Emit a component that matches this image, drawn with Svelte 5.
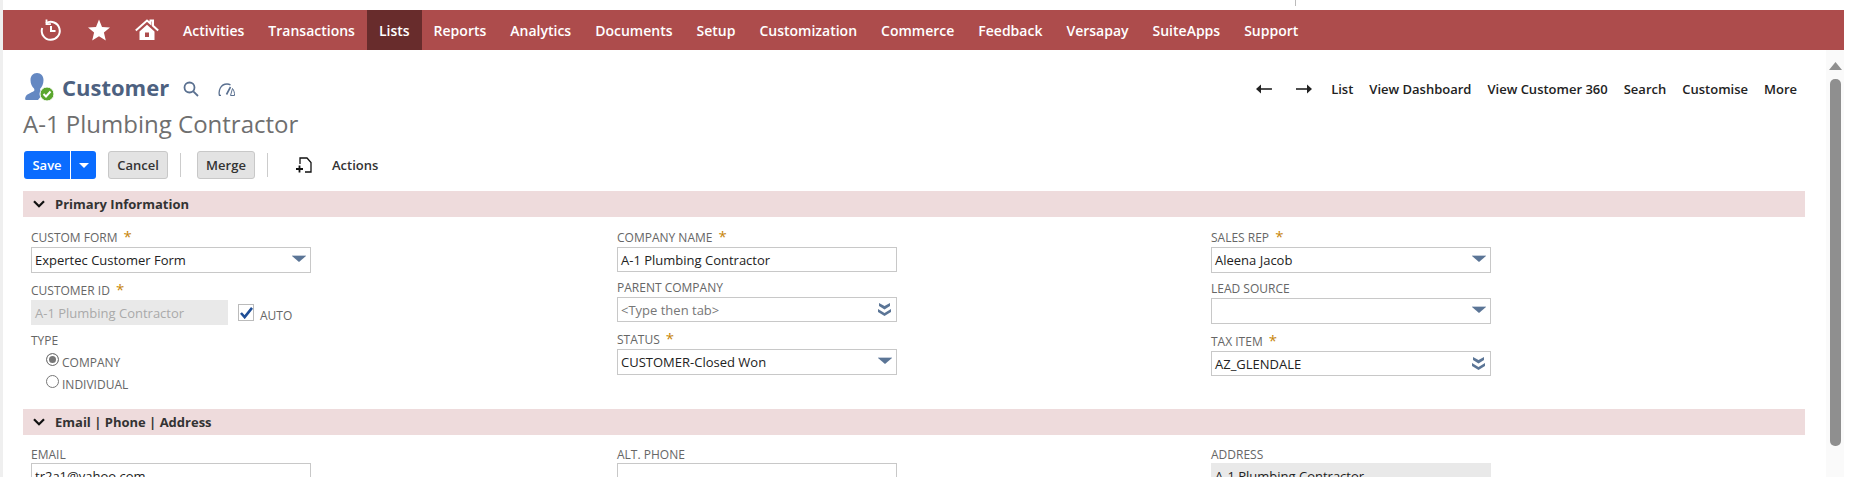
<script>
  const menu = ["Activities", "Transactions", "Lists", "Reports", "Analytics", "Documents", "Setup", "Customization", "Commerce", "Feedback", "Versapay", "SuiteApps", "Support"];
  const links = ["List", "View Dashboard", "View Customer 360", "Search", "Customise", "More"];
</script>

{#snippet arrow()}
  <svg class="arrow" width="14" height="7" viewBox="0 0 14 7"><path d="M0 1h14L7 7z" fill="#5b7596"/><path d="M0 .5h14" stroke="#c5cedb"/></svg>
{/snippet}

{#snippet dbl()}
  <svg class="arrow double" width="13" height="13" viewBox="0 0 13 13"><path d="M1 0l5.500 3L12 0v3L6.500 6.500 1 3zM0 6l6.500 4L13 6v3l-6.500 4L0 9z" fill="#5b7596"/></svg>
{/snippet}

<div class="page">
  <div class="topline"><span class="tick"></span></div>
  <nav>
    <div class="nav-icons">
      <svg width="24" height="24" viewBox="0 0 24 24" fill="none" stroke="#fff" stroke-width="2">
        <path d="M7 5.200A9 9 0 1 1 3.200 10"/><path d="M7.500 1.500v4.600h4.400" stroke-width="1.800"/><path d="M12 8v5h4.500"/>
      </svg>
      <svg width="24" height="24" viewBox="0 0 24 24"><path d="M12 1.500l3 7.400 8 .6-6.100 5.100 1.900 7.800L12 18.200 5.200 22.400l1.900-7.800L1 9.500l8-.6z" fill="#fff"/></svg>
      <svg width="24" height="24" viewBox="0 0 24 24">
        <path d="M.800 12.500L12 2.500l3.500 3V2.500h2.500v5.200l5.200 4.800" fill="none" stroke="#fff" stroke-width="2"/>
        <path d="M4.500 13.500L12 6.800l7.500 6.700V22H4.500zM10 14.500V19h4v-4.500z" fill="#fff" fill-rule="evenodd"/>
      </svg>
    </div>
    {#each menu as item}
      <a class:active={item === "Lists"} href="#top">{item}</a>
    {/each}
  </nav>

  <div class="body">
    <main>
      <header>
        <div class="title-row">
          <svg class="cust-icon" width="30" height="29" viewBox="0 0 30 29">
            <path d="M12 0c4 0 6.500 3 6.500 7s-1.500 7-3.500 9c0 2 2 2.500 4 3.500L13 27H1c-1 0-1-1.500-.5-3C1.500 21 6 20 9 18c.5-.5.5-1.500 0-2.500C7 13.500 5.500 11 5.500 7S8 0 12 0z" fill="#6488c2"/>
            <circle cx="22" cy="21" r="7" fill="#5aa62d" stroke="#fff" stroke-width="1"/>
            <path d="M18.500 21l2.500 2.500 4.500-5" fill="none" stroke="#fff" stroke-width="2"/>
          </svg>
          <h1>Customer</h1>
          <svg class="search" width="16" height="16" viewBox="0 0 16 16" fill="none" stroke="#5a7090" stroke-width="1.800"><circle cx="6.500" cy="6.500" r="5"/><path d="M10.300 10.300L15 15"/></svg>
          <svg class="gauge" width="18" height="13" viewBox="0 0 18 13" fill="none" stroke="#5a7090" stroke-width="1.300">
            <path d="M3 12.500H1.500C.2 8 2.500 1 9 1c1.500 0 2.700.4 3.500 1"/>
            <path d="M8.500 11.500L12.500 4" stroke-width="1.600"/>
            <path d="M14.500 5.500c1.500 2 2.200 4.500 2 7h-4z" stroke-width="1"/>
          </svg>
          <div class="links">
            <svg class="nav-arrow" width="16" height="10" viewBox="0 0 16 10"><path d="M5 .5v9L0 5z" fill="#222"/><path d="M4 5h12" stroke="#222" stroke-width="1.600"/></svg>
            <svg class="nav-arrow next" width="16" height="10" viewBox="0 0 16 10"><path d="M11 .5v9L16 5z" fill="#222"/><path d="M0 5h12" stroke="#222" stroke-width="1.600"/></svg>
            {#each links as link}<a href="#top">{link}</a>{/each}
          </div>
        </div>
        <div class="record">A-1 Plumbing Contractor</div>
      </header>

      <div class="toolbar">
        <div class="save"><span>Save</span><span class="caret"><svg width="10" height="5" viewBox="0 0 10 5"><path d="M0 0h10L5 5z" fill="#fff"/></svg></span></div>
        <button class="cancel">Cancel</button>
        <i class="sep"></i>
        <button class="merge">Merge</button>
        <i class="sep"></i>
        <svg class="action-icon" width="16" height="16" viewBox="0 0 16 16" fill="none" stroke="#111" stroke-width="1.300"><path d="M4 7V1h7l4 4.500V15H9"/><path d="M0 12h7M3.500 8.500v7" stroke-width="1.800"/></svg>
        <span class="actions">Actions</span>
      </div>

      <section>
        <div class="band">
          <svg width="12" height="8" viewBox="0 0 12 8" fill="none" stroke="#111" stroke-width="2.200"><path d="M1 1.200l5 5 5-5"/></svg>
          <b>Primary Information</b>
        </div>
        <div class="fields">
          <div class="col">
            <label class="lab">CUSTOM FORM <em>*</em></label>
            <div class="box tall">Expertec Customer Form {@render arrow()}</div>
            <label class="lab id">CUSTOMER ID <em>*</em></label>
            <div class="auto-row">
              <div class="box off">A-1 Plumbing Contractor</div>
              <span class="check"><svg width="13" height="12" viewBox="0 0 14 13"><path d="M1 6.500l4 4.500 8-10" fill="none" stroke="#1f4e96" stroke-width="2.800"/></svg></span>
              <span class="opt auto">AUTO</span>
            </div>
            <label class="lab type">TYPE</label>
            <div class="radio"><span class="dot on"></span><span class="opt">COMPANY</span></div>
            <div class="radio"><span class="dot"></span><span class="opt">INDIVIDUAL</span></div>
          </div>
          <div class="col">
            <label class="lab">COMPANY NAME <em>*</em></label>
            <div class="box">A-1 Plumbing Contractor</div>
            <label class="lab parent">PARENT COMPANY</label>
            <div class="box hint">&lt;Type then tab&gt; {@render dbl()}</div>
            <label class="lab status">STATUS <em>*</em></label>
            <div class="box tall">CUSTOMER-Closed Won {@render arrow()}</div>
          </div>
          <div class="col">
            <label class="lab">SALES REP <em>*</em></label>
            <div class="box tall">Aleena Jacob {@render arrow()}</div>
            <label class="lab lead">LEAD SOURCE</label>
            <div class="box tall">{@render arrow()}</div>
            <label class="lab status">TAX ITEM <em>*</em></label>
            <div class="box">AZ_GLENDALE {@render dbl()}</div>
          </div>
        </div>
      </section>

      <section class="second">
        <div class="band">
          <svg width="12" height="8" viewBox="0 0 12 8" fill="none" stroke="#111" stroke-width="2.200"><path d="M1 1.200l5 5 5-5"/></svg>
          <b>Email | Phone | Address</b>
        </div>
        <div class="fields contact">
          <div class="col"><label class="lab">EMAIL</label><div class="box tall">tr2a1@yahoo.com</div></div>
          <div class="col"><label class="lab">ALT. PHONE</label><div class="box tall"></div></div>
          <div class="col"><label class="lab">ADDRESS</label><div class="box tall addr">A-1 Plumbing Contractor</div></div>
        </div>
      </section>
    </main>

    <aside class="scroll">
      <svg width="13" height="8" viewBox="0 0 13 8"><path d="M0 8L6.500 0 13 8z" fill="#8f8f8f"/></svg>
      <div class="thumb"></div>
    </aside>
  </div>
</div>

<style>
  :global(body) {
    margin: 0;
    overflow: hidden;
    background: #fff;
  }

  .page {
    height: 477px;
    overflow: hidden;
    box-sizing: border-box;
    border-left: 3px solid #efefef;
    font-family: "Open Sans", "Liberation Sans", sans-serif;
    color: #222;
  }

  .topline {
    height: 10px;
    position: relative;
  }

  .tick {
    position: absolute;
    left: 1292px;
    top: 0;
    width: 1px;
    height: 6px;
    background: #bbb;
  }

  nav {
    width: 1841px;
    height: 40px;
    background: #ad4c4c;
    display: flex;
    align-items: stretch;
  }

  .nav-icons {
    display: flex;
    align-items: center;
    gap: 24px;
    padding: 0 12px 0 36px;
  }

  nav a {
    display: flex;
    align-items: center;
    padding: 0 12px;
    color: #fff;
    font-size: 14px;
    font-weight: 600;
    text-decoration: none;
  }

  nav a.active {
    background: #682c2c;
  }

  .body {
    display: flex;
    height: 427px;
  }

  main {
    width: 1823px;
    flex: none;
    box-sizing: border-box;
    padding-left: 20px;
    padding-right: 21px;
  }

  .scroll {
    width: 18px;
    flex: none;
    background: #fafafa;
    display: flex;
    flex-direction: column;
    align-items: center;
    padding-top: 12px;
    box-sizing: border-box;
  }

  .thumb {
    width: 11px;
    height: 367px;
    margin-top: 9px;
    background: #8f8f8f;
    border-radius: 5px;
  }

  .title-row {
    display: flex;
    align-items: center;
    height: 32px;
    padding-top: 23px;
    padding-left: 2px;
  }

  .cust-icon {
    margin-bottom: 3px;
  }

  h1 {
    margin: 0 0 4px 7px;
    font-size: 22px;
    font-weight: 700;
    color: #4d6180;
  }

  .search {
    margin-left: 14px;
  }

  .gauge {
    margin-left: 19px;
  }

  .links {
    margin-left: auto;
    margin-right: 8px;
    display: flex;
    align-items: center;
    gap: 16px;
  }

  .links a {
    color: #222;
    font-size: 13px;
    font-weight: 600;
    text-decoration: none;
  }

  .nav-arrow.next {
    margin-left: 8px;
    margin-right: 3px;
  }

  .record {
    font-size: 24px;
    color: #6f6f6f;
    line-height: 30px;
    margin-top: 4px;
  }

  .toolbar {
    display: flex;
    align-items: center;
    height: 28px;
    margin-top: 12px;
    padding-left: 1px;
  }

  .save {
    width: 72px;
    height: 28px;
    display: flex;
    background: #0a6cff;
    border-radius: 3px;
    color: #fff;
    font-size: 13px;
    font-weight: 600;
    line-height: 28px;
  }

  .save span:first-child {
    width: 46px;
    text-align: center;
    border-right: 1px solid #fff;
  }

  .caret {
    flex: 1;
    display: flex;
    align-items: center;
    justify-content: center;
  }

  button {
    height: 28px;
    box-sizing: border-box;
    background: #e3e3e3;
    border: 1px solid #c8c8c8;
    border-radius: 3px;
    color: #333;
    font-family: inherit;
    font-size: 13px;
    font-weight: 600;
    padding: 0;
  }

  .cancel {
    width: 60px;
    margin-left: 12px;
  }

  .merge {
    width: 58px;
  }

  .sep {
    width: 1px;
    height: 24px;
    background: #ccc;
    margin: 0 16px 0 12px;
  }

  .action-icon {
    margin-left: 12px;
  }

  .actions {
    margin-left: 20px;
    font-size: 13px;
    font-weight: 600;
    color: #333;
  }

  section {
    margin-top: 12px;
  }

  .second {
    margin-top: 0;
  }

  .band {
    height: 26px;
    background: #eedbdc;
    display: flex;
    align-items: center;
    padding-left: 10px;
    gap: 10px;
  }

  .band b {
    font-size: 13px;
    font-weight: 700;
    color: #333;
  }

  .fields {
    display: grid;
    grid-template-columns: 586px 594px 280px;
    padding: 12px 0 6px 8px;
    height: 174px;
  }

  .fields.contact {
    padding-top: 11px;
    height: 60px;
  }

  .contact .lab {
    height: 17px;
  }

  .lab {
    display: block;
    font-size: 12px;
    color: #666;
    line-height: 18px;
    height: 18px;
  }

  .lab em {
    color: #c8860a;
    font-style: normal;
    font-size: 15px;
    margin-left: 3px;
    line-height: 14px;
  }

  .box {
    width: 280px;
    height: 25px;
    box-sizing: border-box;
    border: 1px solid #c8c8c8;
    display: flex;
    align-items: center;
    padding-left: 3px;
    font-size: 13px;
    color: #222;
    position: relative;
    white-space: pre;
  }

  .box.tall {
    height: 26px;
  }

  .arrow {
    position: absolute;
    right: 4px;
    top: 7px;
  }

  .arrow.double {
    right: 5px;
    top: 5px;
  }

  .hint {
    color: #777;
  }

  .off {
    width: 197px;
    background: #e9e9e9;
    border-color: #e9e9e9;
    color: #aaa;
  }

  .addr {
    background: #e9e9e9;
    border-color: #e9e9e9;
  }

  .lab.id {
    margin-top: 9px;
  }

  .lab.parent {
    margin-top: 7px;
  }

  .lab.status {
    margin-top: 9px;
  }

  .lab.lead {
    margin-top: 7px;
  }

  .auto-row {
    display: flex;
    align-items: flex-start;
  }

  .check {
    width: 16px;
    height: 17px;
    box-sizing: border-box;
    border: 1px solid #bbb;
    margin: 4px 0 0 10px;
    display: flex;
    align-items: center;
    justify-content: center;
  }

  .opt {
    font-size: 12px;
    color: #666;
  }

  .auto {
    margin: 7px 0 0 6px;
  }

  .lab.type {
    margin-top: 7px;
  }

  .radio {
    display: flex;
    align-items: center;
    height: 22px;
    margin-left: 15px;
    gap: 3px;
  }

  .radio .opt {
    margin-top: 2px;
  }

  .dot {
    width: 13px;
    height: 13px;
    box-sizing: border-box;
    border: 1px solid #777;
    border-radius: 50%;
    background: #fff;
    margin-top: -3px;
  }

  .dot.on {
    background: #777;
    box-shadow: inset 0 0 0 2px #fff;
  }
</style>
